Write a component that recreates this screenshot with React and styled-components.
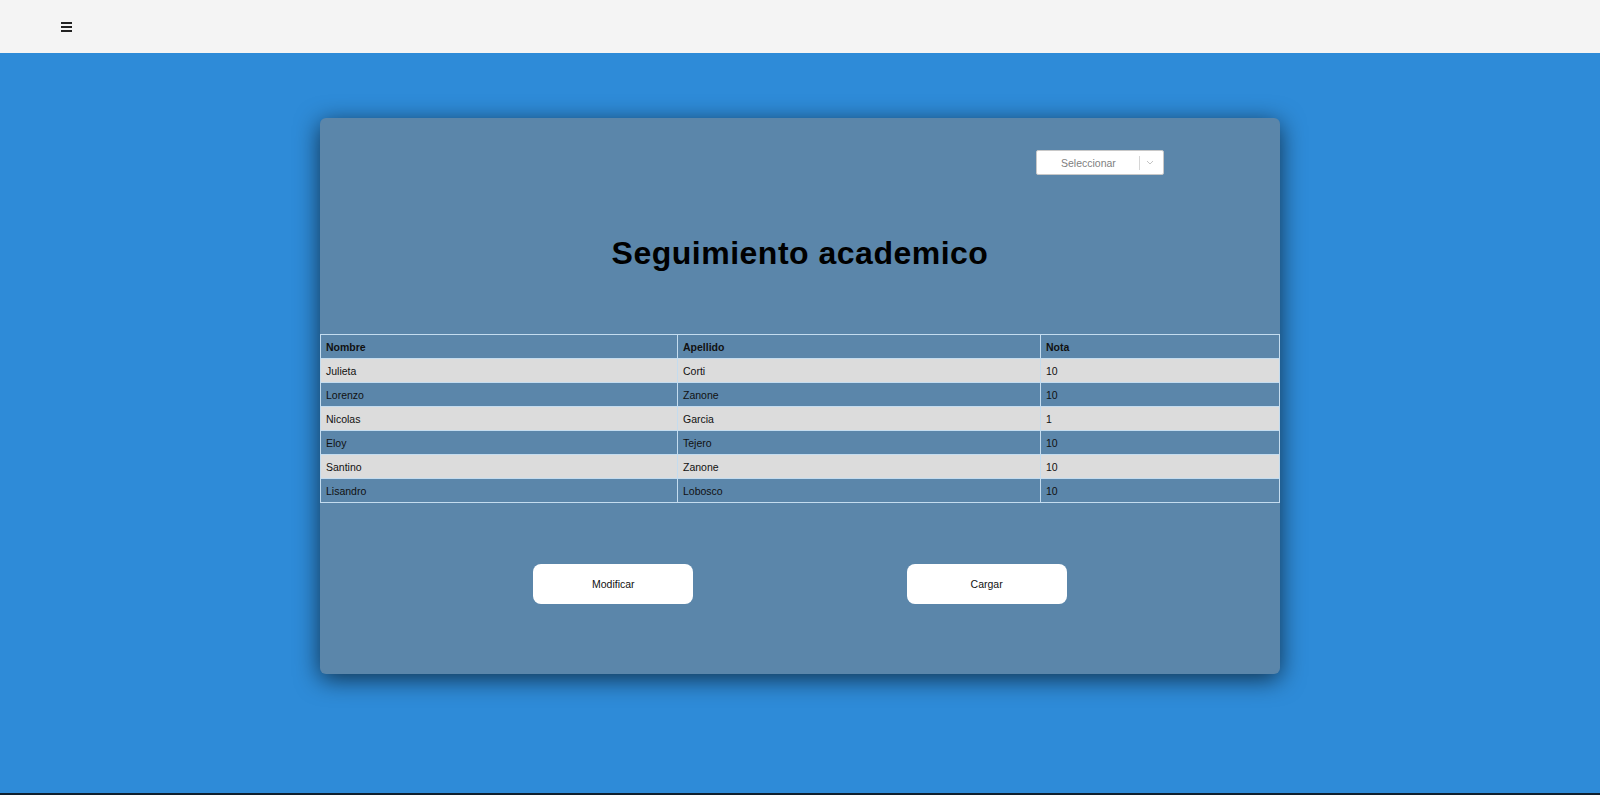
import React from "react";
import styled, { createGlobalStyle } from "styled-components";

const GlobalStyle = createGlobalStyle`
  html, body {
    margin: 0;
    padding: 0;
    background-color: #2e8bd8;
    font-family: "Liberation Sans", Arial, sans-serif;
  }
`;

const alumnos = [
  { nombre: "Julieta", apellido: "Corti", nota: 10 },
  { nombre: "Lorenzo", apellido: "Zanone", nota: 10 },
  { nombre: "Nicolas", apellido: "Garcia", nota: 1 },
  { nombre: "Eloy", apellido: "Tejero", nota: 10 },
  { nombre: "Santino", apellido: "Zanone", nota: 10 },
  { nombre: "Lisandro", apellido: "Lobosco", nota: 10 },
];

const App = () => {
  return (
    <>
      <GlobalStyle />
      <Page>
        <Navbar>
          <MenuButton aria-label="menu">
            <span />
            <span />
            <span />
          </MenuButton>
        </Navbar>

        <Main>
          <Card>
            <SelectRow>
              <Select>
                <span className="placeholder">Seleccionar</span>
                <span className="separator" />
                <svg width="8" height="5" viewBox="0 0 8 5">
                  <path d="M1 1l3 3 3-3" fill="none" stroke="#c4c4c4" strokeWidth="1" />
                </svg>
              </Select>
            </SelectRow>

            <Title>Seguimiento academico</Title>

            <Table>
              <colgroup>
                <col style={{ width: "357px" }} />
                <col style={{ width: "363px" }} />
                <col />
              </colgroup>
              <thead>
                <tr>
                  <th>Nombre</th>
                  <th>Apellido</th>
                  <th>Nota</th>
                </tr>
              </thead>
              <tbody>
                {alumnos.map((a, index) => (
                  <Row key={index} $light={index % 2 === 0}>
                    <td>{a.nombre}</td>
                    <td>{a.apellido}</td>
                    <td>{a.nota}</td>
                  </Row>
                ))}
              </tbody>
            </Table>

            <Buttons>
              <Button>Modificar</Button>
              <Button>Cargar</Button>
            </Buttons>
          </Card>
        </Main>
        <Taskbar />
      </Page>
    </>
  );
};

const Page = styled.div`
  display: flex;
  flex-direction: column;
  min-height: 795px;
`;

const Navbar = styled.header`
  height: 53px;
  background-color: #f4f4f4;
  display: flex;
  align-items: center;
  padding-left: 61px;
  box-sizing: border-box;
`;

const MenuButton = styled.div`
  display: flex;
  flex-direction: column;
  gap: 1.6px;
  width: 11px;
  margin-top: 1px;
  span {
    display: block;
    height: 2px;
    background-color: #222;
  }
`;

const Main = styled.main`
  flex: 1;
  background-color: #2e8bd8;
  display: flex;
  justify-content: center;
  padding-top: 65px;
`;

const Card = styled.section`
  width: 960px;
  height: 556px;
  background-color: #5b86aa;
  border-radius: 6px;
  box-shadow: 0 5px 24px rgba(0, 0, 0, 0.65);
  display: flex;
  flex-direction: column;
  padding-top: 32px;
  box-sizing: border-box;
`;

const SelectRow = styled.div`
  display: flex;
  justify-content: flex-end;
  padding-right: 116px;
`;

const Select = styled.div`
  width: 128px;
  height: 25px;
  box-sizing: border-box;
  background-color: #fff;
  border: 1px solid #c8c8c8;
  border-radius: 2px;
  display: flex;
  align-items: center;
  font-size: 10.5px;
  color: #808080;
  .placeholder {
    flex: 1;
    padding-left: 24px;
  }
  .separator {
    width: 1px;
    height: 14px;
    background-color: #d6d6d6;
    margin-right: 6px;
  }
  svg {
    margin-right: 9px;
  }
`;

const Title = styled.h1`
  margin: 60px 0 62px;
  text-align: center;
  font-size: 32px;
  letter-spacing: 0.5px;
  line-height: 37px;
  font-weight: bold;
  color: #000;
`;

const Table = styled.table`
  width: 960px;
  border-collapse: collapse;
  table-layout: fixed;
  font-size: 10.5px;
  color: #111;
  th, td {
    border: 1px solid #c4dcef;
    height: 24px;
    padding: 0 5px;
    text-align: left;
    box-sizing: border-box;
  }
  th {
    font-weight: bold;
    background-color: #5b86aa;
  }
`;

const Row = styled.tr`
  background-color: ${(props) => (props.$light ? "#dcdcdc" : "#5b86aa")};
`;

const Buttons = styled.div`
  display: flex;
  justify-content: space-evenly;
  margin-top: 61px;
`;

const Button = styled.button`
  width: 160px;
  height: 40px;
  background-color: #fff;
  border: none;
  border-radius: 8px;
  font-family: "Liberation Sans", Arial, sans-serif;
  font-size: 10.5px;
  color: #111;
  cursor: pointer;
`;

const Taskbar = styled.footer`
  height: 2px;
  background-color: #10202e;
`;

export default App;
